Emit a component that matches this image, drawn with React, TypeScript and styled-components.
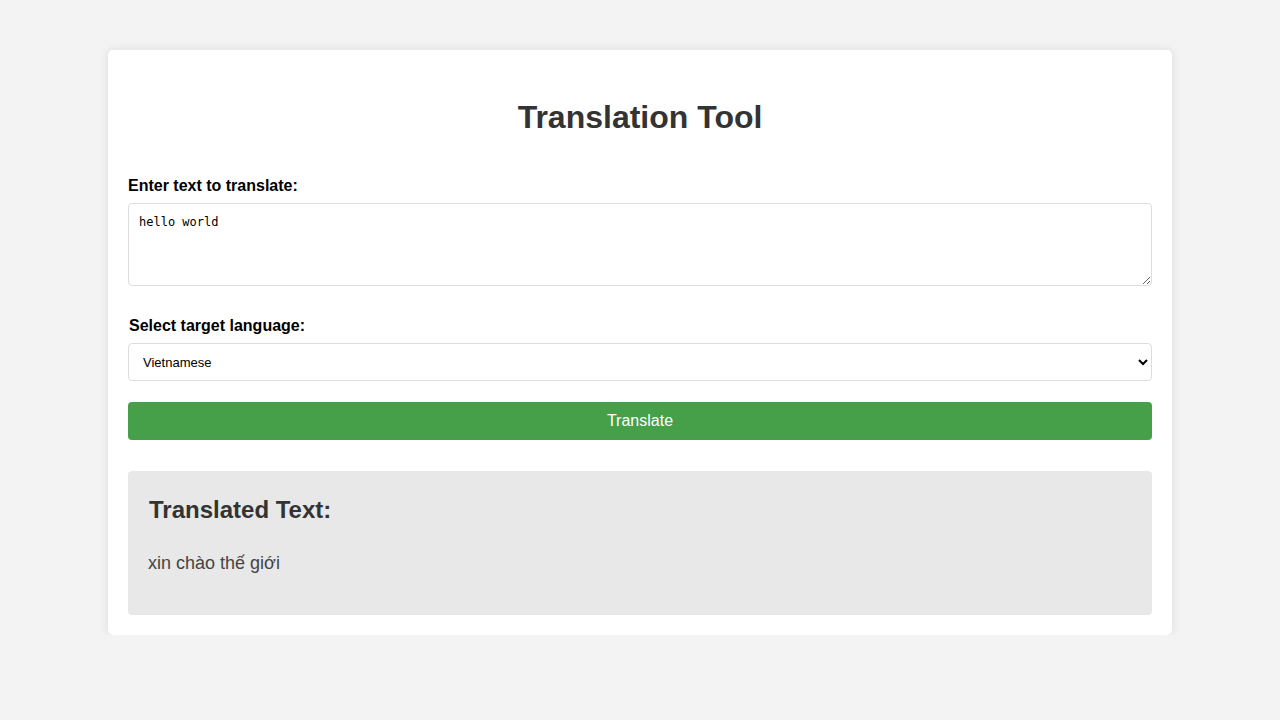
import React, { useState } from "react";
import styled, { createGlobalStyle } from "styled-components";

const Global = createGlobalStyle`
  html, body { margin: 0; padding: 0; }
  body {
    background: #f3f3f3;
    font-family: "Liberation Sans", Arial, sans-serif;
  }
`;

const Page = styled.div`
  display: flex;
  justify-content: center;
  padding-top: 50px;
`;

const Card = styled.div`
  width: 1024px;
  padding: 20px;
  background: #fff;
  border-radius: 5px;
  box-shadow: 0 0 10px rgba(0, 0, 0, 0.1);
  display: flex;
  flex-direction: column;
`;

const Title = styled.h1`
  margin: 29px 0 41px;
  font-size: 32px;
  line-height: 37px;
  font-weight: bold;
  color: #333;
  text-align: center;
`;

const Label = styled.label<{ $shift?: number }>`
  display: block;
  font-size: 16px;
  line-height: 18px;
  font-weight: bold;
  color: #000;
  margin-left: ${(p) => p.$shift ?? 0}px;
  margin-bottom: 8px;
`;

const TextArea = styled.textarea`
  box-sizing: border-box;
  width: 100%;
  height: 83px;
  padding: 11px 10px;
  border: 1px solid #ddd;
  border-radius: 4px;
  font-family: "DejaVu Sans Mono", monospace;
  font-size: 12px;
  color: #000;
  margin: 0 0 31px;
  display: block;
`;

const Select = styled.select`
  box-sizing: border-box;
  width: 100%;
  height: 38px;
  padding: 0 10px;
  border: 1px solid #ddd;
  border-radius: 4px;
  background: #fff;
  font-family: "Liberation Sans", Arial, sans-serif;
  font-size: 13px;
  color: #000;
  margin: 0 0 21px;
`;

const Button = styled.button`
  width: 100%;
  height: 38px;
  border: none;
  border-radius: 4px;
  background: #45a049;
  color: #fff;
  font-family: "Liberation Sans", Arial, sans-serif;
  font-size: 16px;
  cursor: pointer;
  margin: 0 0 31px;
`;

const Result = styled.div`
  background: #e8e8e8;
  border-radius: 4px;
  padding: 25px 20px 41px;
`;

const ResultTitle = styled.h2`
  margin: 0 0 29px 1px;
  font-size: 24px;
  line-height: 28px;
  font-weight: bold;
  color: #333;
`;

const ResultText = styled.p`
  margin: 0;
  font-size: 18px;
  line-height: 21px;
  color: #444;
`;

export default function App() {
  const [text, setText] = useState("hello world");
  const [lang, setLang] = useState("vi");
  return (
    <>
      <Global />
      <Page>
        <Card>
          <Title>Translation Tool</Title>
          <Label htmlFor="src">Enter text to translate:</Label>
          <TextArea id="src" value={text} onChange={(e) => setText(e.target.value)} />
          <Label htmlFor="lang" $shift={1}>Select target language:</Label>
          <Select id="lang" value={lang} onChange={(e) => setLang(e.target.value)}>
            <option value="vi">Vietnamese</option>
            <option value="fr">French</option>
            <option value="es">Spanish</option>
            <option value="de">German</option>
          </Select>
          <Button>Translate</Button>
          <Result>
            <ResultTitle>Translated Text:</ResultTitle>
            <ResultText>xin chào thế giới</ResultText>
          </Result>
        </Card>
      </Page>
    </>
  );
}
